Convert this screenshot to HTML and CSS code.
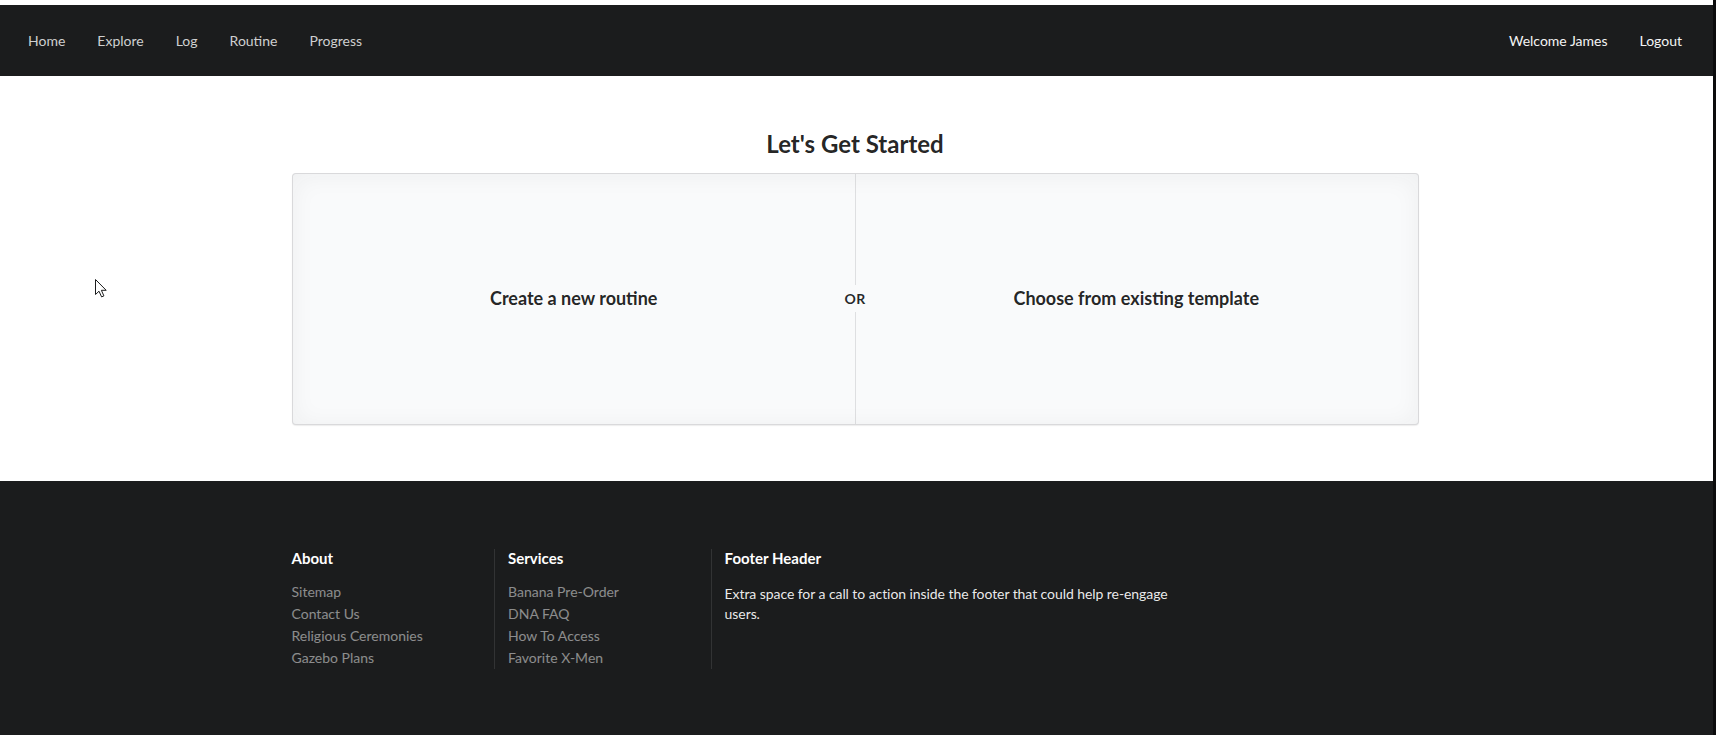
FILE: index.html
```html
<!DOCTYPE html>
<html lang="en">
<head>
<meta charset="utf-8">
<title>Let's Get Started</title>
<link rel="stylesheet" href="styles.css">
</head>
<body>
<div class="page">
  <nav class="menu">
    <div class="menu-left">
      <a class="item" href="#">Home</a>
      <a class="item" href="#">Explore</a>
      <a class="item" href="#">Log</a>
      <a class="item" href="#">Routine</a>
      <a class="item" href="#">Progress</a>
    </div>
    <div class="menu-right">
      <span class="item item-light">Welcome James</span>
      <a class="item item-light" href="#">Logout</a>
    </div>
  </nav>

  <main class="main">
    <div class="container">
      <h2 class="title">Let's Get Started</h2>
      <div class="placeholder">
        <div class="option"><h3 class="option-header">Create a new routine</h3></div>
        <div class="option"><h3 class="option-header">Choose from existing template</h3></div>
        <div class="vdivider"><span class="vdivider-text">OR</span></div>
      </div>
    </div>
  </main>

  <footer class="footer">
    <div class="container">
      <div class="fgrid">
        <div class="fcol fcol-narrow">
          <h4 class="fheader">About</h4>
          <div class="flinks">
            <a class="flink" href="#">Sitemap</a>
            <a class="flink" href="#">Contact Us</a>
            <a class="flink" href="#">Religious Ceremonies</a>
            <a class="flink" href="#">Gazebo Plans</a>
          </div>
        </div>
        <div class="fcol fcol-narrow fcol-divided">
          <h4 class="fheader">Services</h4>
          <div class="flinks">
            <a class="flink" href="#">Banana Pre-Order</a>
            <a class="flink" href="#">DNA FAQ</a>
            <a class="flink" href="#">How To Access</a>
            <a class="flink" href="#">Favorite X-Men</a>
          </div>
        </div>
        <div class="fcol fcol-wide fcol-divided">
          <h4 class="fheader">Footer Header</h4>
          <p class="ftext">Extra space for a call to action inside the footer that could help re-engage users.</p>
        </div>
      </div>
    </div>
  </footer>
</div>

<svg class="cursor" width="14" height="20" viewBox="0 0 14 20" aria-hidden="true">
  <path d="M0.5 0.5 L0.5 15.5 L4 12.2 L6.6 17.9 L8.9 16.9 L6.4 11.3 L11.2 11.3 Z" fill="#ffffff" stroke="#1b1c1d" stroke-width="1" stroke-linejoin="miter"/>
</svg>
</body>
</html>
```

FILE: styles.css
```css
html, body {
  margin: 0;
  padding: 0;
  overflow: hidden;
  background: #0c0c0d;
}

*, *::before, *::after {
  box-sizing: border-box;
}

body {
  font-family: Lato, "Liberation Sans", Arial, sans-serif;
  font-size: 14px;
  line-height: 1.4285em;
  color: rgba(0, 0, 0, 0.87);
}

.page {
  width: 1713px;
  height: 735px;
  background: #ffffff;
  padding-top: 5px;
  display: flex;
  flex-direction: column;
}

/* ---------- top menu ---------- */
.menu {
  height: 71px;
  flex: 0 0 auto;
  background: #1b1c1d;
  display: flex;
  align-items: center;
  justify-content: space-between;
  padding: 2px 15px 0 12px;
}

.menu-left,
.menu-right {
  display: flex;
  align-items: center;
}

.item {
  display: block;
  padding: 0 16px;
  font-size: 14px;
  line-height: 1.2;
  color: #cfd0d0;
  text-decoration: none;
}

.item-light {
  color: #f4f4f4;
}

/* ---------- main ---------- */
.main {
  background: #ffffff;
  padding: 53px 0 56px;
}

.container {
  width: 1127px;
  margin-left: calc(50% - 565px);
}

.title {
  margin: 0 0 13px;
  text-align: center;
  font-size: 24px;
  font-weight: 700;
  line-height: 1.2857em;
  color: rgba(0, 0, 0, 0.87);
}

.placeholder {
  position: relative;
  height: 252px;
  display: flex;
  background: #f9fafb;
  border: 1px solid rgba(34, 36, 38, 0.15);
  border-radius: 4px;
  box-shadow: 0 2px 25px 0 rgba(34, 36, 38, 0.05) inset, 0 1px 1px 0 rgba(34, 36, 38, 0.08);
}

.option {
  flex: 1 1 0;
  display: flex;
  align-items: center;
  justify-content: center;
}

.option-header {
  margin: 0;
  font-size: 18px;
  font-weight: 700;
  line-height: 1.2857em;
  color: rgba(0, 0, 0, 0.87);
}

.vdivider {
  position: absolute;
  top: 0;
  bottom: 0;
  left: 50%;
  width: 40px;
  margin-left: -20px;
  display: flex;
  align-items: center;
  justify-content: center;
}

.vdivider::before,
.vdivider::after {
  content: "";
  position: absolute;
  left: 50%;
  width: 0;
  border-left: 1px solid rgba(34, 36, 38, 0.12);
  height: calc(50% - 13.5px);
}

.vdivider::before {
  top: 0;
}

.vdivider::after {
  bottom: 0;
}

.vdivider-text {
  font-size: 14px;
  font-weight: 700;
  letter-spacing: 0.3px;
  color: rgba(0, 0, 0, 0.85);
  line-height: 1;
}

/* ---------- footer ---------- */
.footer {
  flex: 1 1 auto;
  background: #1b1c1d;
  padding: 68px 0 30px;
}

.fgrid {
  display: flex;
  margin: 0 -14px;
}

.fcol {
  padding: 0 14px;
}

.fcol-narrow {
  width: 216.56px;
}

.fcol-wide {
  width: 505.3px;
}

.fcol-divided {
  box-shadow: inset 1px 0 0 0 rgba(255, 255, 255, 0.1);
}

.fheader {
  margin: 0 0 13px;
  font-size: 15px;
  font-weight: 700;
  line-height: 1.2857em;
  color: #ffffff;
}

.flinks {
  display: flex;
  flex-direction: column;
}

.flink {
  display: block;
  font-size: 14px;
  line-height: 22px;
  color: rgba(255, 255, 255, 0.5);
  text-decoration: none;
}

.ftext {
  margin: 0;
  padding-top: 3px;
  font-size: 14px;
  line-height: 20px;
  letter-spacing: -0.07px;
  color: rgba(255, 255, 255, 0.92);
}

/* ---------- mouse pointer overlay ---------- */
.cursor {
  position: absolute;
  left: 95px;
  top: 279px;
}
```
